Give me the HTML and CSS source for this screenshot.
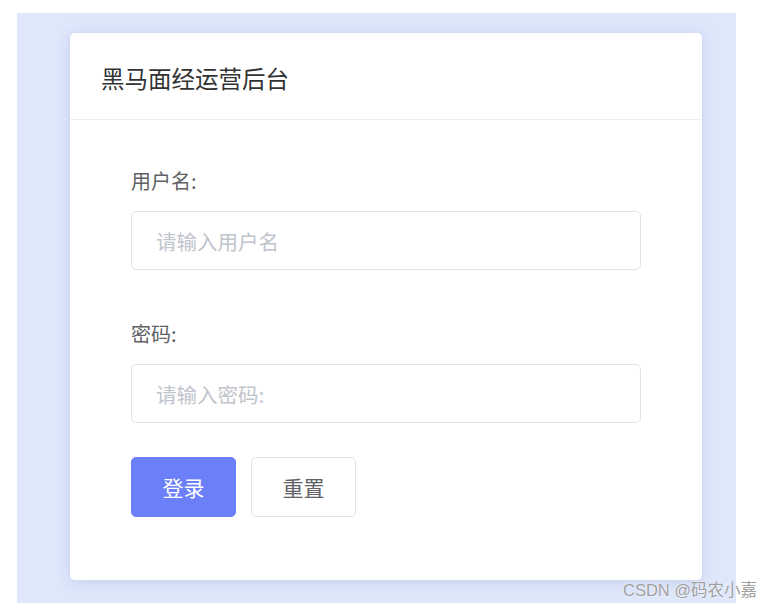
FILE: index.html
```html
<!DOCTYPE html>
<html lang="zh">
<head>
<meta charset="utf-8">
<link rel="stylesheet" href="styles.css">
</head>
<body>
<div class="bg">
  <div class="card">
    <div class="card-header"><span class="title">黑马面经运营后台</span></div>
    <div class="card-body">
      <div class="field">
        <label class="label">用户名:</label>
        <div class="input"><span class="placeholder">请输入用户名</span></div>
      </div>
      <div class="field">
        <label class="label">密码:</label>
        <div class="input"><span class="placeholder">请输入密码:</span></div>
      </div>
      <div class="actions">
        <button class="btn btn-primary">登录</button>
        <button class="btn">重置</button>
      </div>
    </div>
  </div>
</div>
<div class="watermark">CSDN @码农小嘉</div>
</body>
</html>
```
FILE: styles.css
```css
html, body {
  margin: 0;
  padding: 0;
  background: #ffffff;
  font-family: "Noto Sans CJK SC", "Noto Sans", sans-serif;
}
body {
  position: relative;
  width: 775px;
  height: 606px;
  overflow: hidden;
}
.bg {
  margin: 13px 0 0 17px;
  width: 719px;
  height: 590px;
  box-sizing: border-box;
  padding: 20px 0 0 53px;
  background: #dfe7fb;
}
.card {
  width: 632px;
  height: 547px;
  background: #fff;
  border-radius: 5px;
  box-shadow: 0 2px 14px rgba(120, 140, 190, 0.25);
}
.card-header {
  height: 87px;
  box-sizing: border-box;
  padding: 0 31px;
  display: flex;
  align-items: center;
  border-bottom: 1px solid #ebeef5;
}
.title {
  font-size: 23.5px;
  line-height: 30px;
  margin-top: 4px;
  color: #333;
}
.card-body {
  display: flex;
  flex-direction: column;
  padding: 46px 61px 0 61px;
}
.field + .field {
  margin-top: 49px;
}
.label {
  display: block;
  font-size: 20px;
  line-height: 30px;
  color: #606266;
  margin-bottom: 15px;
}
.input {
  height: 59px;
  box-sizing: border-box;
  border: 1px solid #dfe3ec;
  border-radius: 5px;
  padding-left: 24px;
  display: flex;
  align-items: center;
}
.placeholder {
  font-size: 20.5px;
  color: #c0c4cc;
}
.actions {
  display: flex;
  gap: 15px;
  margin-top: 34px;
}
.btn {
  width: 105px;
  height: 60px;
  border-radius: 5px;
  border: 1px solid #dfe3ec;
  background: #fff;
  color: #606266;
  font-family: "Noto Sans CJK SC", sans-serif;
  font-size: 21px;
  padding: 0;
}
.btn-primary {
  background: #6b7ff8;
  border-color: #6b7ff8;
  color: #fff;
}
.watermark {
  position: absolute;
  left: 623px;
  top: 577px;
  font-family: "Liberation Sans", "Noto Sans CJK SC", sans-serif;
  font-size: 16.5px;
  color: #a0a0a0;
  text-shadow: 0 0 2px #fff;
}
```
